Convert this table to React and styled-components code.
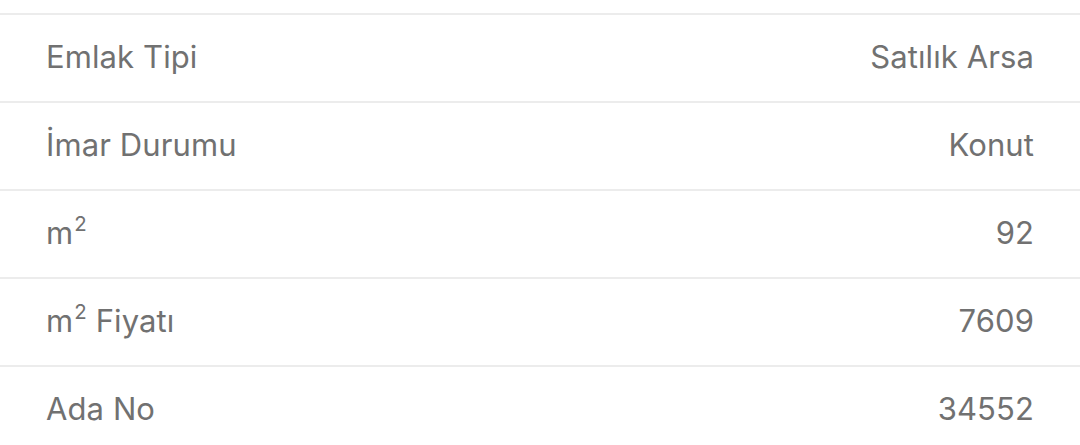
import React from "react";
import styled, { createGlobalStyle } from "styled-components";

const Global = createGlobalStyle`
  html, body { margin: 0; padding: 0; background: #ffffff; }
  body { font-family: Inter, "Noto Sans", sans-serif; }
`;

const List = styled.div`
  display: flex;
  flex-direction: column;
  padding-top: 13px;
  width: 1080px;
`;

const Row = styled.div`
  display: flex;
  align-items: center;
  justify-content: space-between;
  box-sizing: border-box;
  height: 88px;
  padding: 0 46px 4px 46px;
  border-top: 2px solid #ececec;
  color: #717171;
  font-size: 31px;
  font-weight: 400;
  letter-spacing: 0.1px;
`;

const Label = styled.span``;
const Value = styled.span``;
const Sup = styled.sup`
  font-size: 0.66em;
  vertical-align: 0.62em;
  line-height: 0;
  margin-left: 1px;
`;

const rows = [
  { label: "Emlak Tipi", value: "Satılık Arsa" },
  { label: "İmar Durumu", value: "Konut" },
  { label: (<>m<Sup>2</Sup></>), value: "92" },
  { label: (<>m<Sup>2</Sup> Fiyatı</>), value: "7609" },
  { label: "Ada No", value: "34552" },
];

export default function App() {
  return (
    <>
      <Global />
      <List>
        {rows.map((r, i) => (
          <Row key={i}>
            <Label>{r.label}</Label>
            <Value>{r.value}</Value>
          </Row>
        ))}
      </List>
    </>
  );
}
